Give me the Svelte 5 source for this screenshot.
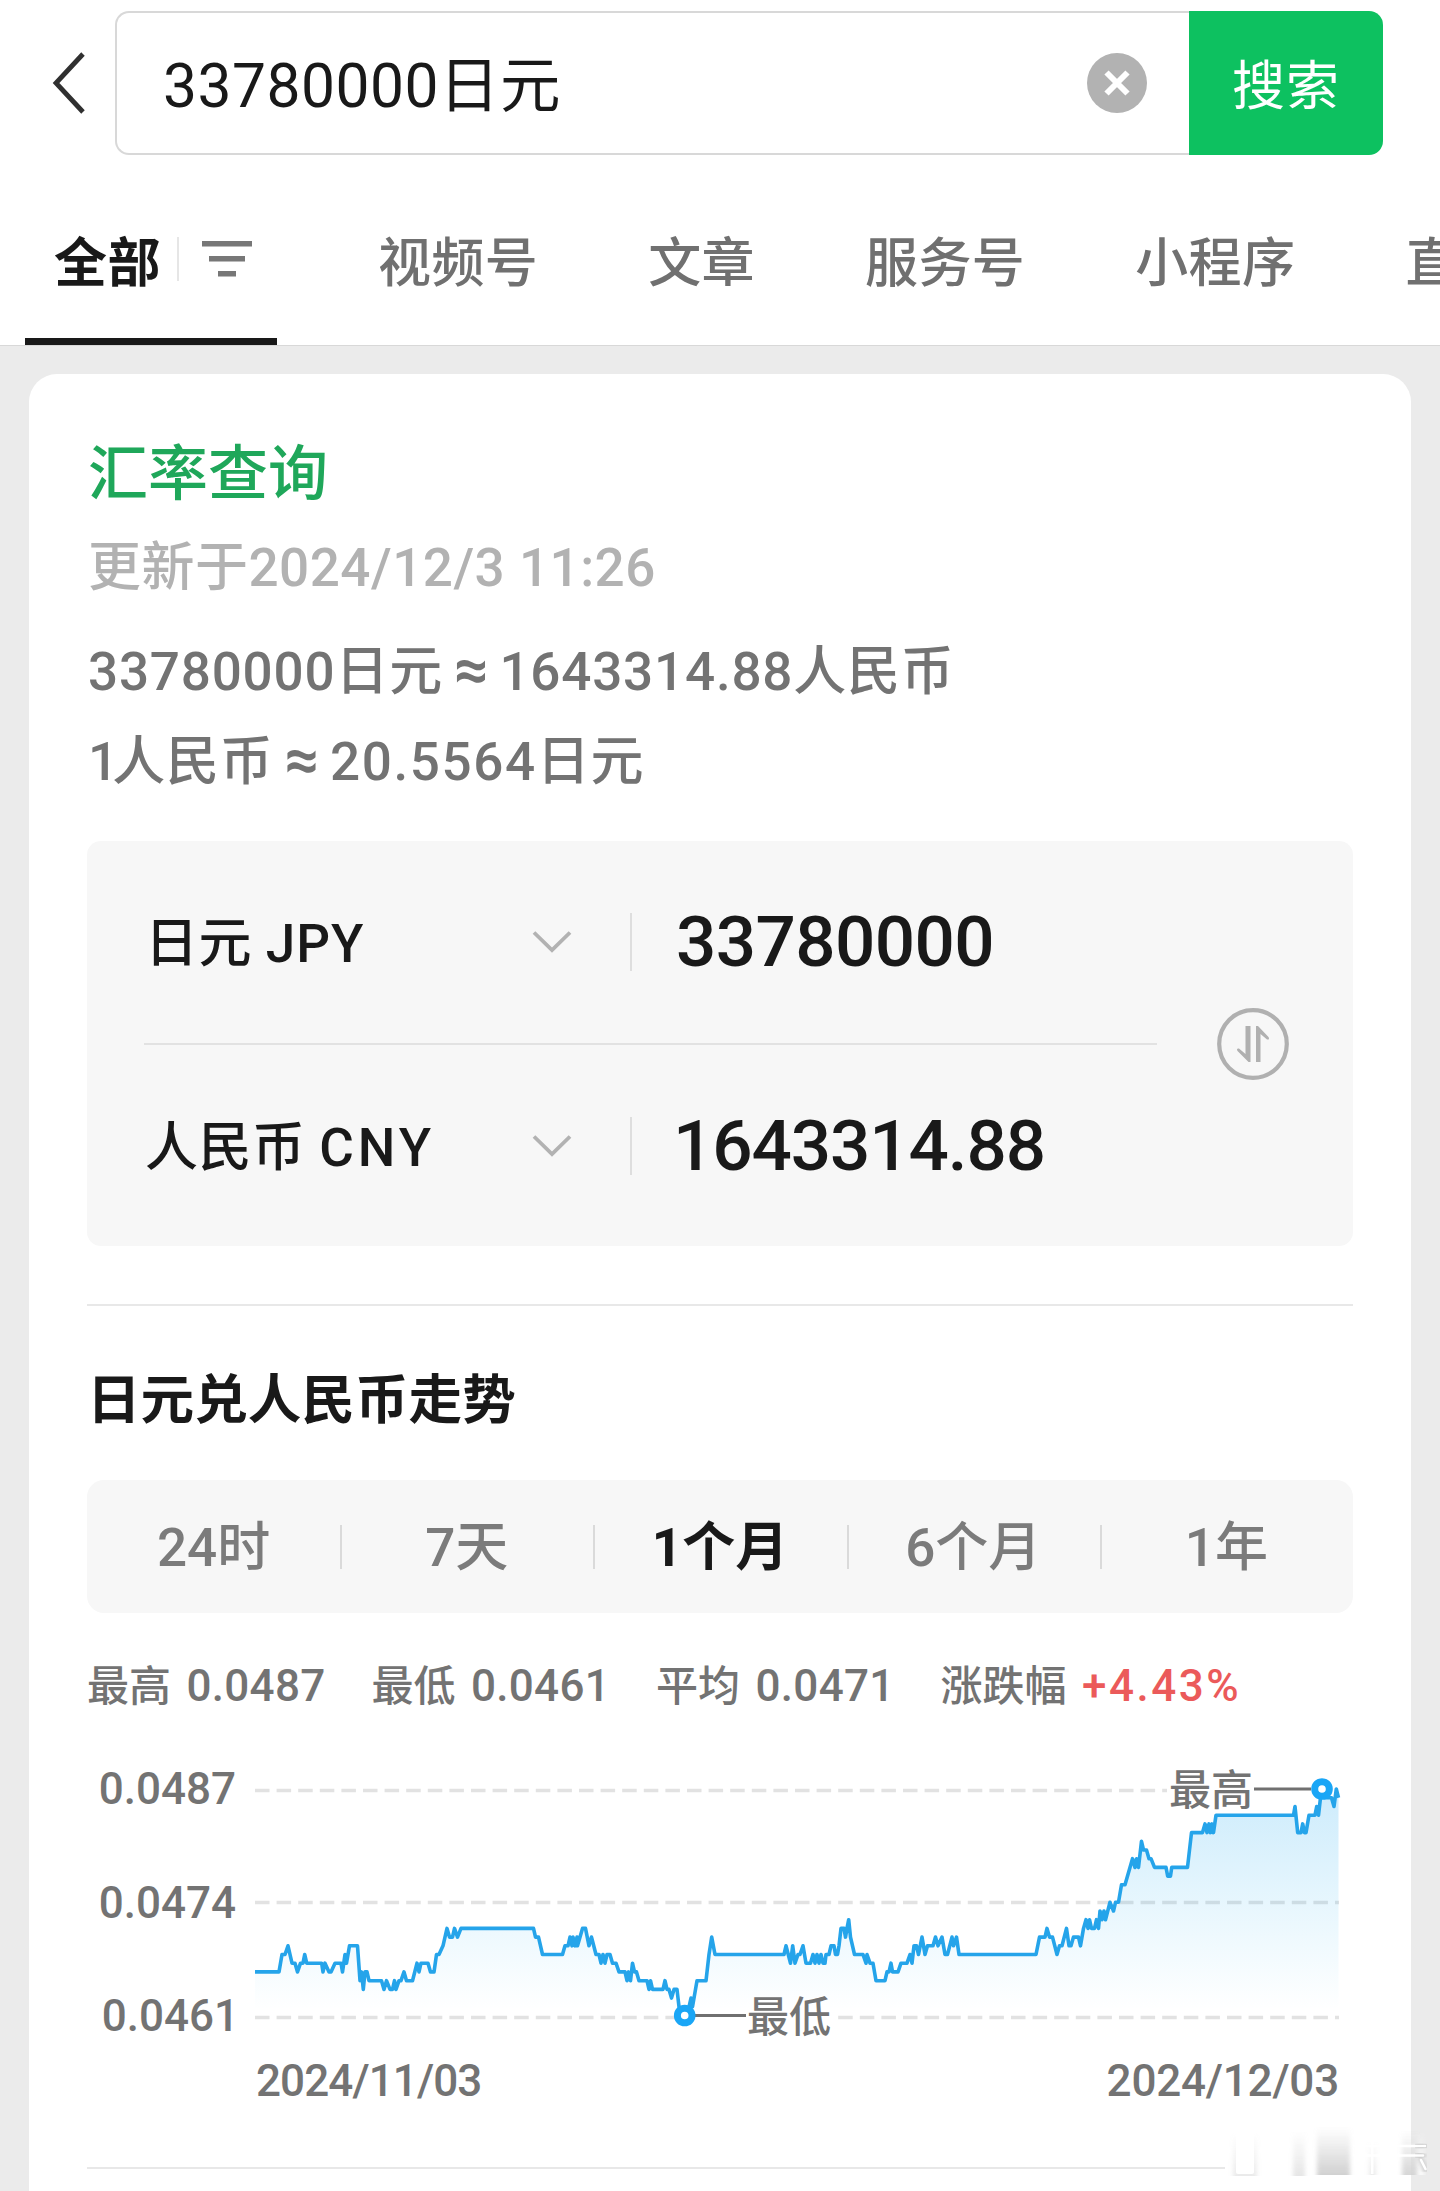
<script>
  let keyword = $state('33780000日元')
  let activeTab = $state('全部')
  let activeRange = $state('1个月')

  const tabs = ['视频号', '文章', '服务号', '小程序', '直播']
  const ranges = ['24时', '7天', '1个月', '6个月', '1年']

  const currencies = [
    { name: '日元', code: 'JPY', amount: '33780000' },
    { name: '人民币', code: 'CNY', amount: '1643314.88' },
  ]

  const stats = [
    { label: '最高', value: '0.0487' },
    { label: '最低', value: '0.0461' },
    { label: '平均', value: '0.0471' },
    { label: '涨跌幅', value: '+4.43%', up: true },
  ]

  // [x, steps of 0.0001 above the lowest rate]
  const points = [
    [0, 5], [24, 5], [27, 7], [30, 7], [33, 8], [37, 6], [40, 6], [42.5, 5], [45.5, 6], [48, 6], [49.7, 7], [51.7, 6],
    [66.7, 6], [68, 5], [70, 6], [74, 5], [76, 5], [80, 6], [86, 6], [87.5, 5], [90, 7], [91.5, 6], [94.5, 8], [102.5, 8],
    [105, 4], [106.5, 5], [108.3, 3], [110, 5], [112, 5], [114, 4], [126.5, 4], [129, 3], [131.5, 4], [135, 3], [137.5, 3],
    [139.5, 4], [141, 3], [144, 4], [146, 4], [149, 5], [151.5, 4], [157.5, 4], [162, 6], [164, 5], [166, 6], [173, 6],
    [175.5, 5], [179, 5], [181.5, 7], [184, 7], [188, 8], [192, 10], [194.5, 9], [197.5, 9], [199.5, 10], [202.5, 9],
    [206, 10], [278.5, 10], [280.5, 9], [283.5, 9], [287.5, 7], [307.5, 7], [310, 8], [313, 8], [315, 9], [317, 8],
    [318, 9], [320, 8], [322, 9], [322.5, 8], [327.5, 10], [330.5, 10], [334, 8], [336.5, 9], [341, 7], [344, 7], [346, 6],
    [348, 7], [350, 6], [352, 7], [355, 7], [357.5, 6], [361, 6], [364, 5], [370, 5], [372, 4], [373.5, 5], [375.5, 4],
    [377.5, 6], [379.5, 5], [381.5, 5], [384, 4], [392, 4], [394, 3], [395.5, 4], [397.5, 3], [408, 3], [410, 4], [412, 3],
    [414, 3], [416.5, 2], [419, 3], [422, 3], [424, 1], [429.7, 0], [434, 1], [436, 2], [437.5, 1], [442, 4], [451, 4],
    [454, 7], [456.7, 9], [460, 7], [529, 7], [531, 8], [535.5, 6], [537.7, 8], [540, 6], [543, 7], [545, 7], [548, 8],
    [551, 6], [555.5, 6], [558, 7], [560, 6], [562, 7], [564, 6], [566, 7], [568, 6], [570, 6], [571, 7], [574, 7],
    [576, 8], [579, 8], [580.5, 7], [582.5, 7], [584, 8], [586, 10], [589, 10], [590.5, 9], [592, 10], [593.7, 11],
    [595.5, 9], [599.5, 7], [608, 7], [611, 6], [612, 7], [615, 6], [618, 6], [621, 4], [630, 4], [632, 5], [634, 5],
    [636, 6], [637.5, 5], [643, 5], [646, 6], [652, 6], [655, 7], [657, 6], [659, 8], [661.5, 8], [663.5, 7], [667, 9],
    [670, 7], [672.5, 8], [678, 8], [680.5, 9], [683, 8], [687, 9], [690, 7], [692.5, 7], [697, 9], [698.5, 8], [701.5, 9],
    [704, 7], [781, 7], [784.5, 9], [790, 9], [792, 10], [794.5, 9], [797.5, 9], [802, 7], [804.5, 8], [807, 8],
    [811.5, 10], [814, 8], [816, 8], [818.5, 9], [823.5, 9], [825.5, 8], [828.5, 10], [831, 11], [833, 10], [834.5, 11],
    [836.5, 10], [839.5, 10], [841.5, 11], [843.5, 10], [845, 12], [847, 11], [849, 12], [850.5, 11], [855, 13],
    [858.5, 12], [860.5, 13], [863.5, 13], [866.5, 15], [870, 15], [877.5, 18], [880, 17], [881.5, 18], [883.5, 17],
    [886.5, 20], [888.5, 19], [891.5, 19], [894, 18], [896, 18], [899.5, 17], [911, 17], [912.7, 16], [915.5, 16],
    [916.7, 17], [932.5, 17], [936.5, 21], [947.5, 21], [950, 22], [952, 21], [954, 22], [955.5, 21], [957, 22],
    [958.5, 21], [961, 23], [1038.5, 23], [1040, 24], [1042.7, 21], [1046, 21], [1047.7, 22], [1049.5, 21], [1051, 21],
    [1054, 23], [1060, 23], [1061.7, 24], [1063.5, 23], [1065.5, 25], [1067, 26], [1070, 25], [1076.5, 25], [1079, 24],
    [1081.3, 26], [1083.5, 25],
  ]

  const bottom = 255.5
  const step = 8.71
  const line = 'M' + points.map(([x, n]) => `${x} ${(bottom - n * step).toFixed(1)}`).join('L')
  const area = `${line}V${bottom}H0Z`
</script>

<div class="page">
  <header>
    <div class="search">
      <svg class="back" viewBox="0 0 36 64" width="36" height="64">
        <path d="M32 3 L5 32 L32 61" fill="none" stroke="#303030" stroke-width="4.8" />
      </svg>
      <div class="field">
        <span class="keyword">{keyword}</span>
        <svg class="clear" viewBox="0 0 60 60" width="60" height="60">
          <circle cx="30" cy="30" r="30" fill="#b2b2b2" />
          <path d="M19.500 19.500 L40.500 40.500 M40.500 19.500 L19.500 40.500" stroke="#fff" stroke-width="6" />
        </svg>
      </div>
      <button class="submit">搜索</button>
    </div>

    <nav>
      <button class="tab all" class:active={activeTab === '全部'}>
        <span>全部</span>
        <i class="bar"></i>
        <svg viewBox="0 0 50 36" width="50" height="36" fill="#777">
          <rect x="0" y="0" width="50" height="5.500" />
          <rect x="7" y="15" width="36" height="5.500" />
          <rect x="16" y="30" width="18" height="5.500" />
        </svg>
      </button>
      {#each tabs as tab}
        <button class="tab">{tab}</button>
      {/each}
    </nav>
  </header>

  <main>
    <h1>汇率查询</h1>
    <p class="updated">更新于2024/12/3 11:26</p>
    <p class="rate">33780000日元<b>≈</b>1643314.88人民币</p>
    <p class="rate"><span class="one">1</span>人民币<b>≈</b><span class="wide">20.5564</span>日元</p>

    <section class="converter">
      <div class="rows">
        {#each currencies as currency}
          <div class="row">
            <span class="name">{currency.name} <span class={currency.code}>{currency.code}</span></span>
            <svg class="chevron" viewBox="0 0 40 24" width="40" height="24">
              <path d="M2 2.500 L20 20 L38 2.500" fill="none" stroke="#b2b2b2" stroke-width="3.800" />
            </svg>
            <span class="amount" class:long={currency.amount.length > 8}>{currency.amount}</span>
          </div>
        {/each}
      </div>
      <svg class="swap" viewBox="0 0 72 72" width="72" height="72">
        <circle cx="36" cy="36" r="33.800" fill="none" stroke="#b0b0b0" stroke-width="4.200" />
        <path d="M28.500 18 H33.500 V54 L31.500 54 L20.500 43 Q19 40 22 40.500 L28.500 46 Z" fill="#b0b0b0" />
        <path d="M43.500 54 H39 V18 L41 18 L51.500 29 Q53 32 50 31.500 L43.500 26 Z" fill="#b0b0b0" />
      </svg>
    </section>

    <section class="trend">
      <h2>日元兑人民币走势</h2>
      <div class="ranges">
        {#each ranges as range}
          <button class:active={activeRange === range} onclick={() => (activeRange = range)}>{range}</button>
        {/each}
      </div>

      <div class="stats">
        {#each stats as stat}
          <span>{stat.label} <em class:up={stat.up}>{stat.value}</em></span>
        {/each}
      </div>

      <div class="chart">
        <div class="labels">
          <span>0.0487</span>
          <span>0.0474</span>
          <span>0.0461</span>
        </div>
        <div class="plot">
          <svg viewBox="0 0 1090 280" width="1090" height="280">
            <defs>
              <linearGradient id="fill" gradientUnits="userSpaceOnUse" x1="0" y1="29" x2="0" y2="250">
                <stop offset="0" stop-color="#10a0f0" stop-opacity="0.21" />
                <stop offset="1" stop-color="#10b0f0" stop-opacity="0" />
              </linearGradient>
            </defs>
            <g stroke="#e2e2e2" stroke-width="3.400" stroke-dasharray="14.5 7.1">
              <path d="M0 30.500 H912" />
              <path d="M0 142.500 H1084" />
              <path d="M0 257.500 H420" />
              <path d="M583.200 257.500 H1084" />
            </g>
            <path d={area} fill="url(#fill)" />
            <path d={line} fill="none" stroke="#25a4ea" stroke-width="3.600" stroke-linejoin="round" />
            <path d="M440 255.500 H491 M999 29 H1056" stroke="#707070" stroke-width="3" />
            <g fill="#fff" stroke="#1aa6f6" stroke-width="7">
              <circle cx="429.700" cy="255.500" r="7.300" />
              <circle cx="1067" cy="29" r="7.300" />
            </g>
            <g class="mark">
              <text x="492" y="272">最低</text>
              <text x="914" y="45">最高</text>
            </g>
          </svg>
          <div class="dates">
            <span class="from">2024/11/03</span>
            <span>2024/12/03</span>
          </div>
        </div>
      </div>
    </section>

    <div class="more"></div>
  </main>

  <svg class="stamp" viewBox="0 0 220 60" width="220" height="60">
    <defs>
      <linearGradient id="fade" x1="0" y1="0" x2="0" y2="1">
        <stop offset="0" stop-color="#b8b8b8" stop-opacity="0" />
        <stop offset="1" stop-color="#b0b0b0" stop-opacity="0.650" />
      </linearGradient>
      <linearGradient id="pale" x1="0" y1="0" x2="0" y2="1">
        <stop offset="0" stop-color="#fff" stop-opacity="0" />
        <stop offset="1" stop-color="#fff" stop-opacity="0.800" />
      </linearGradient>
      <filter id="soft"><feGaussianBlur stdDeviation="2 0.600" /></filter>
    </defs>
    <rect x="5" y="0" width="186" height="52" fill="#fff" />
    <rect x="186" y="10" width="18" height="44" fill="url(#pale)" filter="url(#soft)" />
    <g fill="url(#fade)" filter="url(#soft)">
      <rect x="13" y="12" width="24" height="43" opacity="0.400" />
      <rect x="73" y="10" width="12" height="45" opacity="0.500" />
      <rect x="97" y="6" width="33" height="48" opacity="0.900" />
      <rect x="149" y="20" width="7" height="34" opacity="0.400" />
      <rect x="182" y="10" width="15" height="44" opacity="0.800" />
    </g>
    <rect x="16" y="8" width="18" height="45" rx="2" fill="#fff" />
    <rect x="151" y="10" width="2.500" height="43" fill="#fff" />
    <g fill="none" stroke-linecap="round">
      <path d="M196 25 H205 M196 34.500 H203 M201 38 L205.500 49" stroke="#c8c8c8" stroke-width="4.500" filter="url(#soft)" />
      <path d="M134 25 H205 M134 34.500 H203 M201 39 L205.500 48" stroke="#fff" stroke-width="2.600" />
    </g>
  </svg>
</div>

<style>
  :global(body) {
    margin: 0;
    background: #ebebeb;
  }

  .page {
    position: relative;
    width: 1440px;
    height: 2191px;
    overflow: hidden;
    background: #ebebeb;
    color: #191919;
    font-family: Roboto, 'Noto Sans CJK SC', sans-serif;
    font-size: 53px;
    font-weight: 500;
  }

  h1,
  h2,
  p {
    margin: 0;
    font-weight: 500;
  }

  button {
    padding: 0;
    border: 0;
    background: none;
    color: inherit;
    font: inherit;
  }

  header {
    box-sizing: border-box;
    height: 346px;
    padding-top: 11px;
    overflow: hidden;
    border-bottom: 1px solid #d8d8d8;
    background: #fff;
  }

  .search {
    display: flex;
    align-items: center;
    width: 1383px;
    height: 144px;
  }

  .back {
    flex: none;
    margin: 0 28px 0 51px;
  }

  .field {
    box-sizing: border-box;
    display: flex;
    flex: 1;
    align-items: center;
    justify-content: space-between;
    height: 100%;
    padding: 0 42px 0 46px;
    border: 2px solid #d8d8d8;
    border-right: 0;
    border-radius: 14px 0 0 14px;
  }

  .keyword {
    padding-bottom: 6px;
    font-size: 60.5px;
    font-weight: 400;
    letter-spacing: 0.5px;
  }

  .submit {
    width: 194px;
    height: 100%;
    padding-bottom: 3px;
    border-radius: 0 14px 14px 0;
    background: #0dc160;
    color: #fff;
    font-weight: 400;
    letter-spacing: 1px;
  }

  nav {
    display: flex;
    height: 190px;
    padding-left: 25px;
    gap: 110px;
    white-space: nowrap;
  }

  .tab {
    flex: none;
    height: 190px;
    padding-top: 17px;
    color: #707070;
    letter-spacing: 0.4px;
  }

  .all {
    box-sizing: border-box;
    display: flex;
    align-items: center;
    width: 252px;
    margin-right: -9px;
    padding: 25px 0 0 29px;
    border-bottom: 7px solid transparent;
  }

  .all.active {
    border-color: #191919;
    color: #191919;
    font-weight: 700;
  }

  .bar {
    width: 2px;
    height: 44px;
    margin: 0 23px 0 16px;
    background: #e6e6e6;
  }

  main {
    box-sizing: border-box;
    width: 1382px;
    height: 1900px;
    margin: 28px 0 0 29px;
    padding: 59px 58px 0;
    border-radius: 28px;
    background: #fff;
  }

  h1 {
    height: 84px;
    padding-left: 1px;
    color: #1fa75a;
    font-size: 60px;
    line-height: 84px;
  }

  .updated {
    height: 90px;
    margin-top: 6px;
    padding-left: 1px;
    color: #b2b2b2;
    line-height: 90px;
    letter-spacing: 0.5px;
  }

  .rate {
    height: 90px;
    padding-left: 1px;
    color: #737373;
    line-height: 90px;
    letter-spacing: 0.8px;
  }

  .updated + .rate {
    margin-top: 14px;
  }

  .rate b {
    display: inline-block;
    margin: 0 10px 0 11px;
    font-size: 60px;
    line-height: 60px;
  }

  .one {
    letter-spacing: -6px;
  }

  .wide {
    letter-spacing: 1.6px;
  }

  .converter {
    display: flex;
    align-items: center;
    box-sizing: border-box;
    height: 405px;
    margin-top: 34px;
    padding-left: 57px;
    border-radius: 14px;
    background: #f7f7f7;
  }

  .rows {
    width: 1013px;
  }

  .row {
    display: flex;
    align-items: center;
    height: 202px;
  }

  .row + .row {
    border-top: 2px solid #e2e2e2;
  }

  .name {
    width: 387px;
    padding: 0 0 5px 1px;
    letter-spacing: 0.5px;
  }

  .JPY {
    letter-spacing: 1px;
  }

  .CNY {
    letter-spacing: 4px;
  }

  .chevron {
    margin-right: 58px;
  }

  .amount {
    padding-left: 46px;
    background: linear-gradient(#dedede, #dedede) left center / 2px 58px no-repeat;
    font-size: 71px;
    letter-spacing: -0.6px;
  }

  .long {
    padding-left: 43px;
    letter-spacing: -1.1px;
  }

  .swap {
    margin-left: 60px;
  }

  .trend {
    margin-top: 58px;
    border-top: 2px solid #e8e8e8;
  }

  h2 {
    padding: 50px 0 0;
    font-size: 53.6px;
    font-weight: 700;
    line-height: 90px;
  }

  .ranges {
    display: flex;
    height: 133px;
    margin-top: 34px;
    border-radius: 17px;
    background: #f7f7f7;
  }

  .ranges button {
    flex: 1;
    padding-bottom: 7px;
    color: #7b7b7b;
  }

  .ranges button + button {
    background: linear-gradient(#dadada, #dadada) left center / 2px 44px no-repeat;
  }

  .ranges .active {
    color: #191919;
    font-weight: 700;
  }

  .stats {
    display: flex;
    gap: 46px;
    margin-top: 43px;
    color: #737373;
    font-size: 42px;
    line-height: 60px;
    white-space: nowrap;
  }

  .stats em {
    margin-left: 5px;
    font-size: 44px;
    font-style: normal;
    letter-spacing: 0.3px;
  }

  .stats .up {
    color: #eb5a5a;
    letter-spacing: 2.5px;
  }

  .chart {
    display: flex;
    margin-top: 43px;
    color: #737373;
    font-size: 44px;
  }

  .labels {
    display: flex;
    flex-direction: column;
    width: 149px;
    margin-right: 19px;
    padding-top: 1px;
    line-height: 56px;
    text-align: right;
  }

  .labels span {
    height: 113.5px;
  }

  .labels span:last-child {
    margin-right: -3px;
  }

  .plot {
    width: 1084px;
  }

  .plot > svg {
    display: block;
    overflow: visible;
  }

  .mark {
    fill: #737373;
    font-size: 42px;
  }

  .dates {
    display: flex;
    justify-content: space-between;
    margin-top: 13px;
    line-height: 56px;
    letter-spacing: -0.2px;
  }

  .dates .from {
    padding-left: 1px;
    letter-spacing: -0.9px;
  }

  .more {
    margin-top: 58px;
    border-top: 2px solid #e8e8e8;
  }

  .stamp {
    position: absolute;
    right: 0;
    bottom: 10px;
  }
</style>
